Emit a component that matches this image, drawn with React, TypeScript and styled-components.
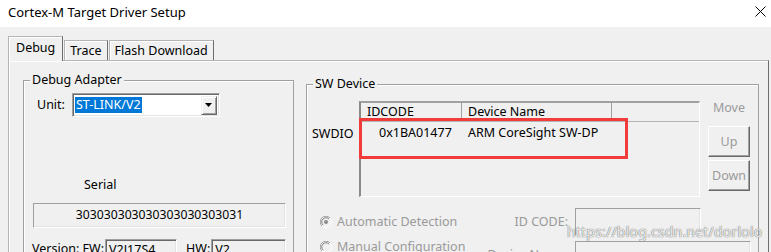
import styled, { createGlobalStyle } from "styled-components";

const GlobalStyle = createGlobalStyle`
  html, body {
    margin: 0;
    padding: 0;
    overflow: hidden;
    background: #f0f0f0;
  }
  * {
    box-sizing: border-box;
  }
`;

export default function App() {
    return (
        <Window>
            <GlobalStyle />
            <TitleBar>
                <Title>Cortex-M Target Driver Setup</Title>
                <CloseButton>
                    <svg width="11" height="11" viewBox="0 0 11 11">
                        <path d="M0.5 0.5 L10.5 10.5 M10.5 0.5 L0.5 10.5" stroke="#000" strokeWidth="1" />
                    </svg>
                </CloseButton>
            </TitleBar>
            <Body>
                <TabStrip>
                    <Tab $active>Debug</Tab>
                    <Tab>Trace</Tab>
                    <Tab>Flash Download</Tab>
                </TabStrip>
                <TabPanel>
                    <AdapterGroup>
                        <Legend>Debug Adapter</Legend>
                        <UnitRow>
                            <FieldLabel>Unit:</FieldLabel>
                            <Combo>
                                <ComboText>ST-LINK/V2</ComboText>
                                <ComboButton>
                                    <svg width="7" height="4" viewBox="0 0 7 4">
                                        <path d="M0 0 H7 L3.5 4 Z" fill="#000" />
                                    </svg>
                                </ComboButton>
                            </Combo>
                        </UnitRow>
                        <SerialLabel>Serial</SerialLabel>
                        <SerialBox>303030303030303030303031</SerialBox>
                        <VersionRow>
                            <FieldLabel>Version: FW:</FieldLabel>
                            <SmallBox $width={72}>V2J17S4</SmallBox>
                            <FieldLabel $gap={8}>HW:</FieldLabel>
                            <SmallBox $width={75}>V2</SmallBox>
                        </VersionRow>
                    </AdapterGroup>
                    <DeviceGroup>
                        <Legend>SW Device</Legend>
                        <DeviceRow>
                            <SwdioLabel>SWDIO</SwdioLabel>
                            <DeviceTable>
                                <HeaderRow>
                                    <HeaderCell $width={101}>IDCODE</HeaderCell>
                                    <HeaderCell $width={150}>Device Name</HeaderCell>
                                    <HeaderCell $width={86} $last />
                                </HeaderRow>
                                <DataRow>
                                    <DataCell $width={101} $pad={18}>0x1BA01477</DataCell>
                                    <DataCell $width={150} $pad={6}>ARM CoreSight SW-DP</DataCell>
                                </DataRow>
                                <Highlight />
                            </DeviceTable>
                            <MoveColumn>
                                <MoveLabel>Move</MoveLabel>
                                <MoveButton>Up</MoveButton>
                                <MoveButton>Down</MoveButton>
                            </MoveColumn>
                        </DeviceRow>
                        <ConfigArea>
                            <RadioColumn>
                                <RadioItem>
                                    <Radio checked />
                                    Automatic Detection
                                </RadioItem>
                                <RadioItem>
                                    <Radio />
                                    Manual Configuration
                                </RadioItem>
                            </RadioColumn>
                            <FieldGrid>
                                <GridLabel>ID CODE:</GridLabel>
                                <EditBox $width={126} />
                                <GridLabel>Device Name:</GridLabel>
                                <EditBox $width={176} />
                            </FieldGrid>
                        </ConfigArea>
                    </DeviceGroup>
                </TabPanel>
            </Body>
            <Watermark>https://blog.csdn.net/dorlolo</Watermark>
        </Window>
    );
}

function Radio({ checked = false }: { checked?: boolean }) {
    return (
        <RadioIcon width="12" height="12" viewBox="0 0 12 12">
            <circle cx="6" cy="6" r="5.5" fill="#f0f0f0" stroke="#fff" />
            <path d="M1.9 10.1 A5.5 5.5 0 0 1 10.1 1.9" fill="none" stroke="#a0a0a0" />
            <path d="M3 9 A4.2 4.2 0 0 1 9 3" fill="none" stroke="#808080" />
            {checked && <circle cx="6" cy="6" r="2" fill="#8c8c8c" />}
        </RadioIcon>
    );
}

const Window = styled.div`
    position: relative;
    width: 771px;
    height: 252px;
    overflow: hidden;
    background: #f0f0f0;
    font-family: "Noto Sans", "Open Sans", sans-serif;
    font-size: 12.5px;
    line-height: 16px;
    color: #000;
`;

const TitleBar = styled.div`
    display: flex;
    justify-content: space-between;
    align-items: flex-start;
    height: 27px;
    padding: 4px 5px 0 8px;
    background: #fff;
`;

const Title = styled.div`
    font-size: 13px;
`;

const CloseButton = styled.div`
    display: flex;
    margin-top: 2px;
`;

const Body = styled.div`
    padding: 9px 2px 0 8px;
`;

const TabStrip = styled.div`
    display: flex;
    align-items: flex-end;
    gap: 1px;
    height: 24px;
`;

const Tab = styled.div<{ $active?: boolean }>`
    position: relative;
    z-index: ${({ $active }) => ($active ? 1 : 0)};
    height: ${({ $active }) => ($active ? "25px" : "20px")};
    margin-bottom: ${({ $active }) => ($active ? "-1px" : "0")};
    padding: ${({ $active }) => ($active ? "3px 7px 0" : "2px 5px 0")};
    background: #f0f0f0;
    border: 1px solid #b4b4b4;
    border-right-color: #6d6d6d;
    border-bottom: none;
    box-shadow: inset 1px 1px 0 #fff;
    white-space: nowrap;
`;

const TabPanel = styled.div`
    display: flex;
    align-items: flex-start;
    gap: 12px;
    height: 220px;
    padding: 0 9px 0 14px;
    border: 1px solid #b4b4b4;
    border-right-color: #6d6d6d;
    box-shadow: inset 1px 1px 0 #fff;
`;

const GroupBox = styled.fieldset`
    min-width: 0;
    height: 200px;
    margin: 0;
    padding: 0;
    border: 1px solid #a0a0a0;
    box-shadow: inset 1px 1px 0 #fff;
`;

const AdapterGroup = styled(GroupBox)`
    width: 271px;
    margin-top: 12px;
`;

const DeviceGroup = styled(GroupBox)`
    width: 453px;
    margin-top: 16px;
`;

const Legend = styled.legend`
    margin-left: 6px;
    padding: 0 2px;
    line-height: 14px;
    background: #f0f0f0;
`;

const UnitRow = styled.div`
    display: flex;
    align-items: center;
    gap: 7px;
    margin-top: 6px;
    padding-left: 13px;
`;

const FieldLabel = styled.span<{ $gap?: number }>`
    margin-left: ${({ $gap }) => $gap ?? 0}px;
    white-space: nowrap;
`;

const sunken = `
    border: 1px solid #a0a0a0;
    border-right-color: #fff;
    border-bottom-color: #fff;
    box-shadow: inset 1px 1px 0 #696969, inset -1px -1px 0 #e3e3e3;
`;

const Combo = styled.div`
    display: flex;
    align-items: center;
    justify-content: space-between;
    width: 148px;
    height: 24px;
    padding: 2px;
    background: #fff;
    ${sunken}
`;

const ComboText = styled.span`
    padding: 0 1px;
    line-height: 16px;
    background: #0078d7;
    color: #fff;
`;

const ComboButton = styled.div`
    display: flex;
    align-items: center;
    justify-content: center;
    width: 16px;
    height: 19px;
    background: #f0f0f0;
    border: 1px solid #f0f0f0;
    border-right-color: #696969;
    border-bottom-color: #696969;
    box-shadow: inset 1px 1px 0 #fff, inset -1px -1px 0 #a0a0a0;
`;

const SerialLabel = styled.div`
    margin-top: 60px;
    padding-left: 60px;
`;

const SerialBox = styled.div`
    width: 253px;
    height: 25px;
    margin: 10px 0 0 9px;
    line-height: 22px;
    text-align: center;
    font-size: 12.2px;
    ${sunken}
    box-shadow: inset -1px -1px 0 #e3e3e3;
`;

const VersionRow = styled.div`
    display: flex;
    align-items: flex-start;
    gap: 1px;
    margin-top: 11px;
    padding-left: 8px;
    line-height: 20px;
`;

const SmallBox = styled.div<{ $width: number }>`
    width: ${({ $width }) => $width}px;
    height: 22px;
    padding-left: 3px;
    line-height: 20px;
    ${sunken}
`;

const DeviceRow = styled.div`
    display: flex;
    align-items: flex-start;
    margin-top: 10px;
`;

const SwdioLabel = styled.div`
    width: 52px;
    margin-top: 26px;
    padding-left: 5px;
    line-height: 14px;
`;

const DeviceTable = styled.div`
    position: relative;
    width: 341px;
    height: 96px;
    border: 2px solid #8a8a8a;
    border-right: 1px solid #fff;
    border-bottom: 1px solid #fff;
    border-top-color: #a0a0a0;
`;

const HeaderRow = styled.div`
    display: flex;
    height: 19px;
    border-bottom: 1px solid #b4b4b4;
`;

const HeaderCell = styled.div<{ $width: number; $last?: boolean }>`
    width: ${({ $width }) => $width}px;
    padding: 2px 0 0 6px;
    line-height: 14px;
    white-space: nowrap;
    border-right: ${({ $last }) => ($last ? "none" : "1px solid #a0a0a0")};
`;

const DataRow = styled.div`
    display: flex;
    height: 22px;
    align-items: center;
`;

const DataCell = styled.div<{ $width: number; $pad: number }>`
    width: ${({ $width }) => $width}px;
    padding-left: ${({ $pad }) => $pad}px;
    white-space: nowrap;
`;

const Highlight = styled.div`
    position: absolute;
    left: -2px;
    top: 15px;
    width: 269px;
    height: 41px;
    border: 3px solid #f23c3c;
`;

const MoveColumn = styled.div`
    display: flex;
    flex-direction: column;
    align-items: center;
    gap: 3px;
    width: 42px;
    margin-left: 8px;
    color: #9a9a9a;
`;

const MoveLabel = styled.div`
    height: 22px;
    line-height: 14px;
`;

const MoveButton = styled.div`
    width: 42px;
    height: 31px;
    line-height: 29px;
    text-align: center;
    background: #f0f0f0;
    border: 1px solid #fff;
    border-right-color: #696969;
    border-bottom-color: #696969;
    box-shadow: inset -1px -1px 0 #a0a0a0;
    &:first-of-type {
        margin-top: 2px;
    }
`;

const ConfigArea = styled.div`
    display: flex;
    align-items: flex-start;
    margin-top: 11px;
    color: #9a9a9a;
`;

const RadioColumn = styled.div`
    display: flex;
    flex-direction: column;
    gap: 9px;
    width: 172px;
    margin-top: 6px;
    padding-left: 13px;
`;

const RadioItem = styled.div`
    display: flex;
    align-items: center;
    gap: 5px;
    white-space: nowrap;
`;

const RadioIcon = styled.svg`
    flex-shrink: 0;
`;

const FieldGrid = styled.div`
    display: grid;
    grid-template-columns: 89px auto;
    column-gap: 7px;
    row-gap: 5px;
    align-items: center;
`;

const GridLabel = styled.div`
    text-align: right;
    white-space: nowrap;
`;

const EditBox = styled.div<{ $width: number }>`
    width: ${({ $width }) => $width}px;
    height: 28px;
    ${sunken}
    box-shadow: inset -1px -1px 0 #e3e3e3;
`;

const Watermark = styled.div`
    position: absolute;
    left: 567px;
    top: 224px;
    font-size: 14px;
    letter-spacing: 0.2px;
    color: rgba(255, 255, 255, 0.85);
    text-shadow: 0 0 1px #777, 0 0 1px #777;
    pointer-events: none;
`;
